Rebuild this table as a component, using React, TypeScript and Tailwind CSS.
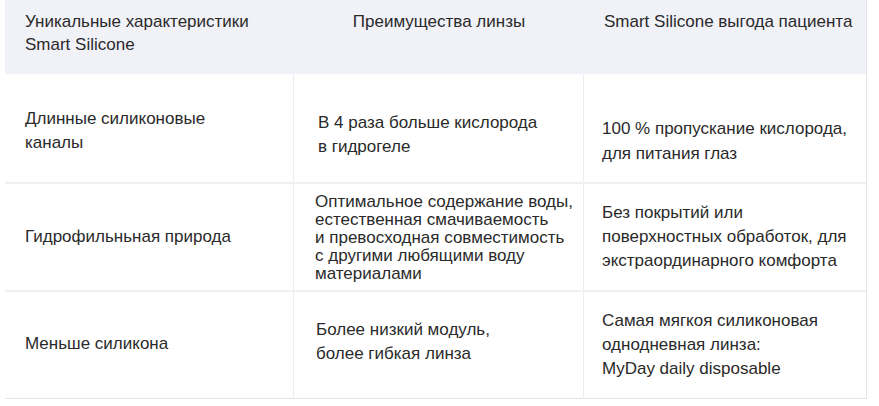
function Cell({ children, className = "" }: { children: React.ReactNode; className?: string }) {
  return <div className={`flex items-center border-r border-[#ececf0] ${className}`}>{children}</div>;
}

export default function App() {
  return (
    <div className="w-[879px] h-[406px] bg-white text-[#2a2a2a] text-[17px]" style={{ fontFamily: '"Liberation Sans", Arial, sans-serif' }}>
      <div className="ml-[5px] w-[862px] border-r border-[#e4e4ea]">
        {/* header */}
        <div className="grid grid-cols-[289px_290px_283px] h-[74px] bg-[#f1f1f8]">
          <div className="pl-[20px] pt-[10px] leading-[23px]">
            Уникальные характеристики<br />Smart Silicone
          </div>
          <div className="pt-[10px] leading-[23px] text-center">Преимущества линзы</div>
          <div className="pl-[20px] pt-[10px] leading-[23px]">Smart Silicone выгода пациента</div>
        </div>
        {/* row 1 */}
        <div className="grid grid-cols-[289px_290px_283px] h-[110px] border-b-2 border-[#f0f0f2]">
          <Cell className="pl-[20px] leading-[24px] pt-[6px]">
            <div>Длинные силиконовые<br />каналы</div>
          </Cell>
          <Cell className="pl-[24px] leading-[24px] pt-[14px]">
            <div>В 4 раза больше кислорода<br />в гидрогеле</div>
          </Cell>
          <div className="flex items-center pl-[18px] leading-[25px] pt-[26px]">
            <div>100 % пропускание кислорода,<br />для питания глаз</div>
          </div>
        </div>
        {/* row 2 */}
        <div className="grid grid-cols-[289px_290px_283px] h-[108px] border-b-2 border-[#f0f0f2]">
          <Cell className="pl-[20px]">
            <div>Гидрофильньная природа</div>
          </Cell>
          <Cell className="pl-[21px] leading-[18px] pt-[2px]">
            <div>
              Оптимальное содержание воды,<br />естественная смачиваемость<br />и превосходная совместимость<br />с другими любящими воду<br />материалами
            </div>
          </Cell>
          <div className="flex items-center pl-[18px] leading-[24px]">
            <div>Без покрытий или<br />поверхностных обработок, для<br />экстраординарного комфорта</div>
          </div>
        </div>
        {/* row 3 */}
        <div className="grid grid-cols-[289px_290px_283px] h-[107px] border-b border-[#e4e4ea]">
          <Cell className="pl-[20px] pb-[3px]">
            <div>Меньше силикона</div>
          </Cell>
          <Cell className="pl-[22px] leading-[24px] pb-[6px]">
            <div>Более низкий модуль,<br />более гибкая линза</div>
          </Cell>
          <div className="flex items-center pl-[18px] leading-[24px]">
            <div>Самая мягкоя силиконовая<br />однодневная линза:<br />MyDay daily disposable</div>
          </div>
        </div>
      </div>
    </div>
  );
}
